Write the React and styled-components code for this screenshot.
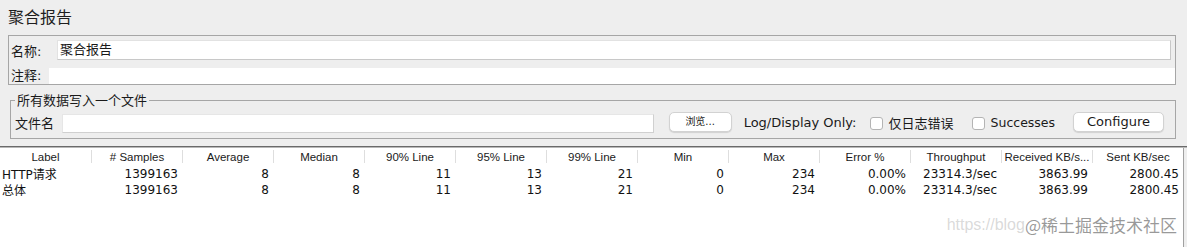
import React from 'react';
import styled, { createGlobalStyle } from 'styled-components';

const GlobalStyle = createGlobalStyle`
  html, body {
    margin: 0;
    padding: 0;
    background: #eeeeee;
  }
  body {
    font-family: 'DejaVu Sans', 'Noto Sans CJK SC', sans-serif;
    color: #1a1a1a;
  }
`;

const cjk = `'DejaVu Sans', 'Noto Sans CJK SC', sans-serif`;

const StyledPage = styled.div`
  position: relative;
  width: 1187px;
  height: 247px;
  overflow: hidden;
  display: flex;
  flex-direction: column;
`;

const StyledTitle = styled.h1`
  margin: 0;
  height: 35px;
  padding-left: 8px;
  font-family: ${cjk};
  font-size: 16px;
  font-weight: normal;
  line-height: 36px;
  color: #1e1e1e;
`;

const StyledNameBox = styled.div`
  margin: 0 11px 0 8px;
  border: 1px solid #a6a6a6;
  display: flex;
  flex-direction: column;
  padding-top: 4px;
  box-sizing: border-box;
  height: 50px;
`;

const StyledRow = styled.div`
  display: flex;
  align-items: center;
  height: ${(p) => p.$h}px;
  margin-top: ${(p) => p.$top || 0}px;
`;

const StyledLabel = styled.span`
  font-family: ${cjk};
  font-size: 13px;
  width: ${(p) => p.$w}px;
  flex: none;
  padding-left: ${(p) => p.$pl || 0}px;
  margin-top: ${(p) => p.$lift || 0}px;
  box-sizing: border-box;
  white-space: nowrap;
`;

const StyledInput = styled.div`
  flex: 1;
  height: 100%;
  background: #ffffff;
  box-sizing: border-box;
  border: ${(p) => (p.$flat ? 'none' : '1px solid #c8c8c8')};
  border-top-color: #e2e2e2;
  border-left-color: #e2e2e2;
  margin-right: ${(p) => p.$mr || 0}px;
  font-family: ${cjk};
  font-size: 13px;
  line-height: 18px;
  padding-left: 2px;
`;

const StyledFieldset = styled.fieldset`
  margin: 7px 11px 0 10px;
  padding: 3px 11px 5px 4px;
  border: 1px solid #a6a6a6;
  min-inline-size: 0;

  legend {
    padding: 0 2px;
    font-family: ${cjk};
    font-size: 13px;
    line-height: 17px;
  }
`;

const StyledFileRow = styled.div`
  display: flex;
  align-items: center;
  height: 21px;
`;

const StyledFileInput = styled.div`
  width: 592px;
  height: 19px;
  margin: 2px 0 0 8px;
  align-self: flex-start;
  background: #ffffff;
  border: 1px solid #d0d0d0;
  border-top-color: #e6e6e6;
  border-left-color: #e6e6e6;
  box-sizing: border-box;
`;

const StyledButton = styled.button`
  width: ${(p) => p.$w}px;
  height: 20px;
  margin-left: ${(p) => p.$ml}px;
  align-self: flex-start;
  padding: 0;
  background: #ffffff;
  border: 1px solid #d2d2d2;
  border-radius: 5px;
  box-shadow: 0 1px 1px rgba(0, 0, 0, 0.12);
  font-family: ${cjk};
  font-size: ${(p) => p.$fs}px;
  color: #1a1a1a;
  line-height: 18px;
`;

const StyledText = styled.span`
  margin-left: ${(p) => p.$ml}px;
  font-family: ${cjk};
  font-size: ${(p) => p.$fs || 13}px;
  white-space: nowrap;
`;

const StyledCheck = styled.span`
  width: 13px;
  height: 13px;
  margin-left: ${(p) => p.$ml}px;
  margin-top: 1px;
  flex: none;
  background: #ffffff;
  border: 1px solid #b4b4b4;
  border-radius: 3px;
  box-sizing: border-box;
`;

const StyledDivider = styled.div`
  margin-top: 7px;
  height: 1px;
  background: #6a6a6a;
  border-bottom: 1px solid #b8b8b8;
`;

const StyledTable = styled.div`
  flex: 1;
  width: 1183px;
  background: #ffffff;
  border-right: 1px solid #a0a0a0;
`;

const StyledGridRow = styled.div`
  display: grid;
  grid-template-columns: repeat(13, 91px);
  height: ${(p) => p.$h}px;
  align-items: center;
`;

const StyledHeadCell = styled.div`
  text-align: center;
  font-family: 'Liberation Sans', 'Noto Sans CJK SC', sans-serif;
  font-size: 11.5px;
  color: #1a1a1a;
  white-space: nowrap;
  overflow: hidden;
  border-left: ${(p) => (p.$first ? 'none' : '1px solid #dedede')};
  line-height: 12px;
  padding-top: 1px;
`;

const StyledCell = styled.div`
  font-family: ${cjk};
  font-size: 12px;
  color: #111111;
  white-space: nowrap;
  text-align: ${(p) => (p.$left ? 'left' : 'right')};
  padding: ${(p) => (p.$left ? '0 0 0 2px' : '0 4px 0 0')};
`;

const StyledWatermark = styled.div`
  position: absolute;
  right: 10px;
  bottom: 10px;
  display: flex;
  align-items: center;
  white-space: nowrap;

  .url {
    font-family: 'Liberation Sans', sans-serif;
    font-size: 16px;
    color: rgba(160, 160, 160, 0.4);
  }

  .brand {
    font-family: 'Noto Sans CJK SC', sans-serif;
    font-size: 17px;
    color: rgba(120, 120, 120, 0.75);
  }
`;

const headers = [
  'Label',
  '# Samples',
  'Average',
  'Median',
  '90% Line',
  '95% Line',
  '99% Line',
  'Min',
  'Max',
  'Error %',
  'Throughput',
  'Received KB/s...',
  'Sent KB/sec',
];

const values = ['1399163', '8', '8', '11', '13', '21', '0', '234', '0.00%', '23314.3/sec', '3863.99', '2800.45'];

const rows = [
  ['HTTP请求', ...values],
  ['总体', ...values],
];

const App = () => {
  return (
    <>
      <GlobalStyle />
      <StyledPage>
        <StyledTitle>聚合报告</StyledTitle>

        <StyledNameBox>
          <StyledRow $h={20}>
            <StyledLabel $w={48} $pl={2}>名称:</StyledLabel>
            <StyledInput $mr={4}>聚合报告</StyledInput>
          </StyledRow>
          <StyledRow $h={16} $top={8}>
            <StyledLabel $w={40} $pl={2} $lift={-4}>注释:</StyledLabel>
            <StyledInput $flat />
          </StyledRow>
        </StyledNameBox>

        <StyledFieldset>
          <legend>所有数据写入一个文件</legend>
          <StyledFileRow>
            <StyledText $ml={0}>文件名</StyledText>
            <StyledFileInput />
            <StyledButton $w={63} $ml={15} $fs={10}>浏览...</StyledButton>
            <StyledText $ml={12}>Log/Display Only:</StyledText>
            <StyledCheck $ml={13} />
            <StyledText $ml={6}>仅日志错误</StyledText>
            <StyledCheck $ml={18} />
            <StyledText $ml={6} $fs={12.5}>Successes</StyledText>
            <StyledButton $w={91} $ml={18} $fs={13}>Configure</StyledButton>
          </StyledFileRow>
        </StyledFieldset>

        <StyledDivider />

        <StyledTable>
          <StyledGridRow $h={17}>
            {headers.map((h, i) => (
              <StyledHeadCell key={h} $first={i === 0}>
                {h}
              </StyledHeadCell>
            ))}
          </StyledGridRow>
          {rows.map((row, r) => (
            <StyledGridRow key={r} $h={16}>
              {row.map((v, i) => (
                <StyledCell key={i} $left={i === 0}>
                  {v}
                </StyledCell>
              ))}
            </StyledGridRow>
          ))}
        </StyledTable>

        <StyledWatermark>
          <span className="url">https://blog</span>
          <span className="brand">@稀土掘金技术社区</span>
        </StyledWatermark>
      </StyledPage>
    </>
  );
};

export default App;
